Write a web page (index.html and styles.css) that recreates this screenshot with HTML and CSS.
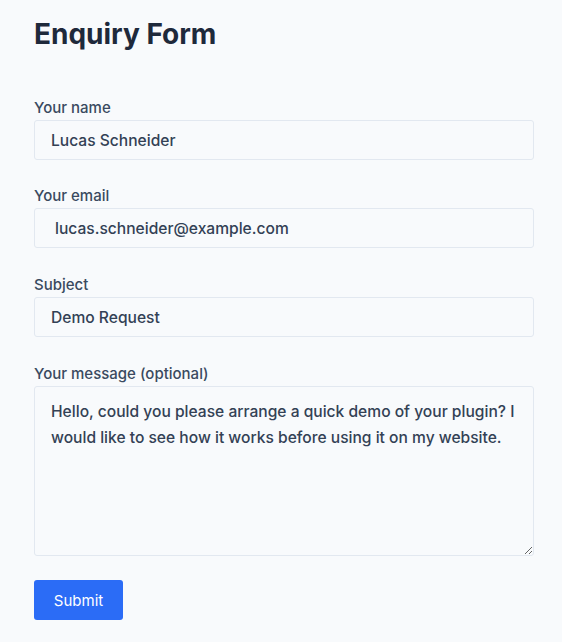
FILE: index.html
```html
<!DOCTYPE html>
<html lang="en">
<head>
    <meta charset="UTF-8">
    <meta name="viewport" content="width=device-width, initial-scale=1.0">
    <title>Enquiry Form</title>
    <link rel="stylesheet" href="styles.css">
</head>
<body>
    <div class="container">
        <h1>Enquiry Form</h1>
        <form action="#" method="POST">
            <div class="field">
                <label for="name">Your name</label>
                <input type="text" id="name" name="name" value="Lucas Schneider">
            </div>

            <div class="field">
                <label for="email">Your email</label>
                <input type="email" id="email" name="email" class="email" value="lucas.schneider@example.com">
            </div>

            <div class="field">
                <label for="subject">Subject</label>
                <input type="text" id="subject" name="subject" value="Demo Request">
            </div>

            <div class="field">
                <label for="message">Your message (optional)</label>
                <textarea id="message" name="message">Hello, could you please arrange a quick demo of your plugin? I would like to see how it works before using it on my website.</textarea>
            </div>

            <button type="submit">Submit</button>
        </form>
    </div>
</body>
</html>
```

FILE: styles.css
```css
body {
    font-family: 'Inter', 'Liberation Sans', sans-serif;
    background: #f8fafc;
    color: #334155;
    margin: 0;
    padding: 0;
}
.container {
    padding: 14px 28px 20px 34px;
}
h1 {
    color: #1e293b;
    font-size: 28px;
    font-weight: 700;
    line-height: 40px;
    margin: 0 0 44px 0;
}
.field {
    margin-bottom: 27px;
}
.field:first-of-type {
    margin-bottom: 26px;
}
.field:last-of-type {
    margin-bottom: 24px;
}
label {
    display: block;
    font-size: 15px;
    font-weight: 500;
    line-height: 20px;
    margin-bottom: 2px;
    color: #3a4a60;
}
input[type="text"], input[type="email"], textarea {
    display: block;
    width: 100%;
    height: 40px;
    padding: 0 16px;
    border: 1px solid #e2e8f0;
    border-radius: 3px;
    background-color: #f8fafc;
    color: #334155;
    font-family: inherit;
    font-size: 15.6px;
    font-weight: 500;
    box-sizing: border-box;
}
input.email {
    padding-left: 20px;
}
textarea {
    height: 170px;
    padding: 12px 14px 12px 16px;
    line-height: 26px;
    resize: vertical;
}
input:focus, textarea:focus {
    outline: none;
    border-color: #2b6cf6;
}
button {
    display: block;
    height: 40px;
    width: 89px;
    background: #2b6cf6;
    color: #ffffff;
    border: none;
    border-radius: 3px;
    font-family: inherit;
    font-size: 15px;
    font-weight: 400;
    cursor: pointer;
}
button:hover {
    background: #1d5be0;
}
```
